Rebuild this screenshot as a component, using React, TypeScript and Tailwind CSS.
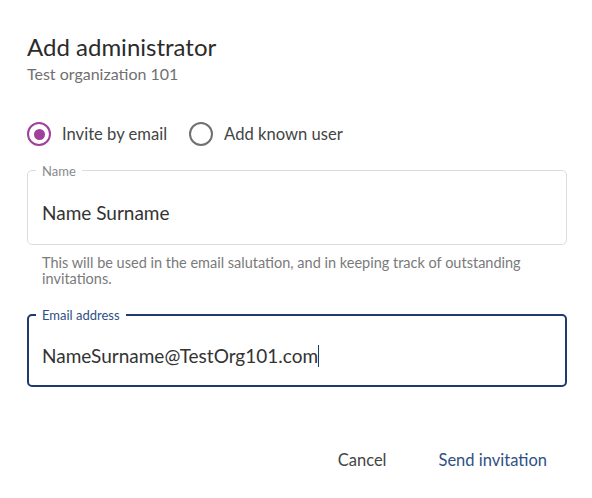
import React from 'react';

const font = { fontFamily: 'Lato, "Noto Sans", sans-serif' };

const App: React.FC = () => {
  return (
    <div className="w-[592px] h-[498px] bg-white text-[#333] flex flex-col" style={font}>
      <div className="pl-[27px] pr-[25px] pt-[33px]">
        <h2 className="text-[24px] leading-[28px] text-[#2b2b2b]">Add administrator</h2>
        <p className="mt-[3px] text-[16px] leading-[20px] text-[#707070]">Test organization 101</p>

        {/* Radio choice */}
        <div className="mt-[38px] flex items-center gap-[22px]">
          <label className="flex items-center gap-[11px]">
            <span className="w-[24px] h-[24px] rounded-full border-[2.5px] border-[#a03f9c] flex items-center justify-center">
              <span className="w-[11px] h-[11px] rounded-full bg-[#a03f9c]" />
            </span>
            <span className="text-[16.6px] text-[#444]">Invite by email</span>
          </label>
          <label className="flex items-center gap-[11px]">
            <span className="w-[24px] h-[24px] rounded-full border-2 border-[#707070]" />
            <span className="text-[16.6px] text-[#444]">Add known user</span>
          </label>
        </div>

        {/* Name */}
        <fieldset className="mt-[17px] h-[81px] border border-[#dcdcdc] rounded-[5px] px-[14px]">
          <legend className="ml-[-6px] px-[6px] text-[13px] leading-[14px] text-[#8a8a8a]">Name</legend>
          <div className="mt-[23px] text-[19px] leading-[24px] text-[#333]">Name Surname</div>
        </fieldset>
        <p className="mt-[10px] px-[15px] text-[14.5px] leading-[16px] text-[#7a7a7a]">
          This will be used in the email salutation, and in keeping track of outstanding invitations.
        </p>

        {/* Email */}
        <fieldset className="mt-[21px] h-[79px] border-2 border-[#1f3a6e] rounded-[5px] px-[13px]">
          <legend className="ml-[-6px] px-[6px] text-[13px] leading-[14px] text-[#2f4f85]">Email address</legend>
          <div className="mt-[22px] text-[19px] leading-[24px] text-[#333] flex items-center">
            NameSurname@TestOrg101.com
            <span className="inline-block w-px h-[22px] bg-[#1f3a6e]" />
          </div>
        </fieldset>
      </div>

      <div className="mt-auto mb-[25px] flex justify-end items-center gap-[52px] pr-[45px]">
        <button className="text-[16.5px] text-[#444]">Cancel</button>
        <button className="text-[16.5px] text-[#2f4f85]">Send invitation</button>
      </div>
    </div>
  );
};

export default App;
